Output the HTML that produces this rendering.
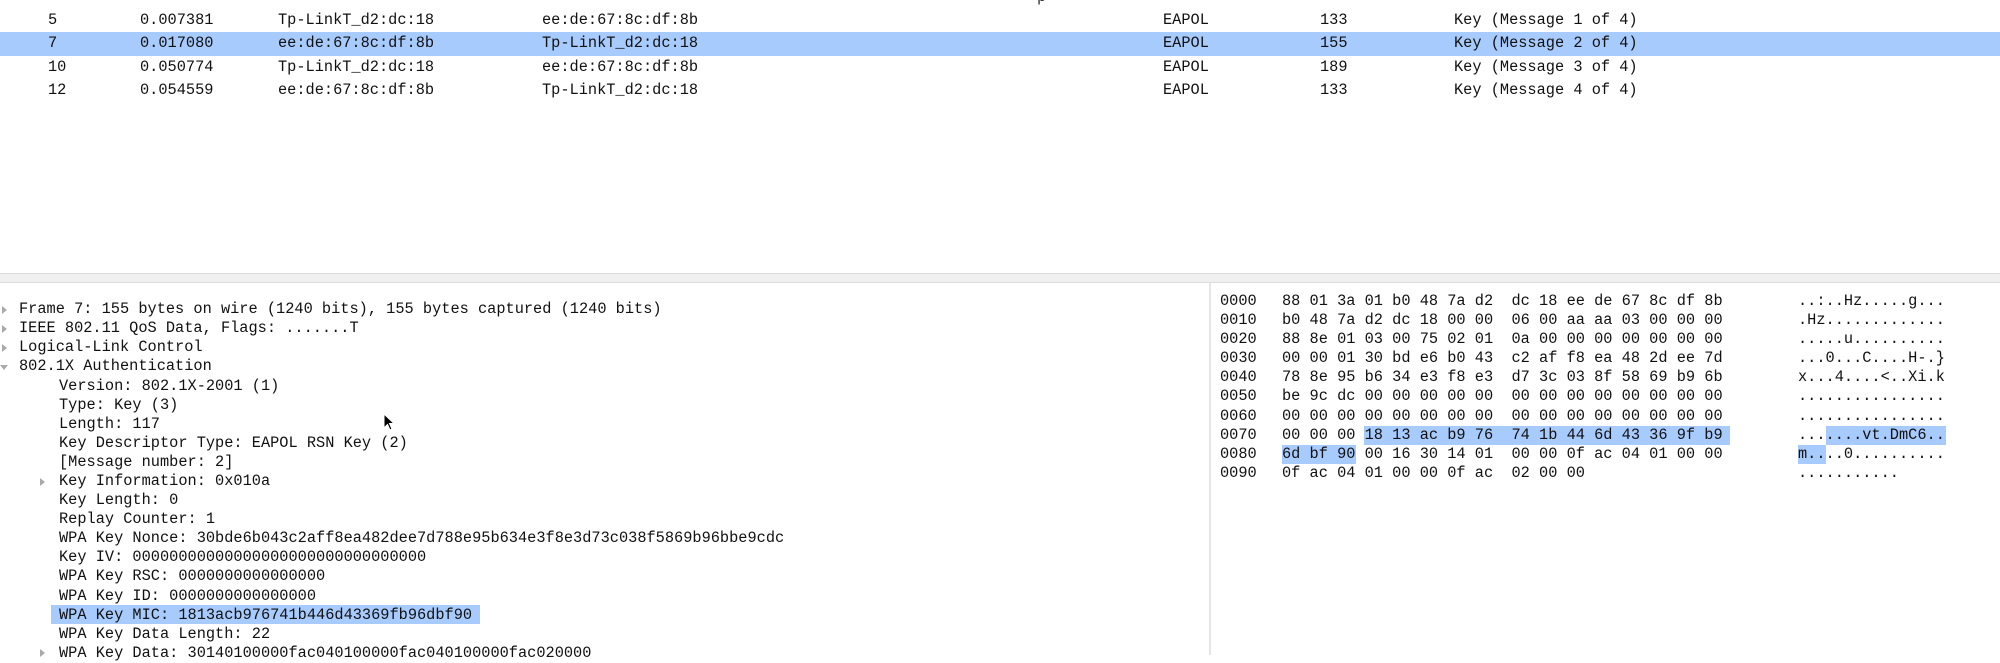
<!DOCTYPE html>
<html><head><meta charset="utf-8"><style>
*{margin:0;padding:0;box-sizing:border-box}
body{width:2000px;height:655px;overflow:hidden;background:#fff;font-family:"Liberation Mono",monospace;font-size:15.3px;color:#111;position:relative}
.a{position:absolute;white-space:pre;line-height:19.1px}
.row{position:absolute;left:0;width:2000px;height:23.5px}
.row .a{top:2px}
.sel{background:#a8cbfd}
.hl{background:#a8cbfd}
.tri{position:absolute;width:0;height:0;border-top:4px solid transparent;border-bottom:4px solid transparent;border-left:5px solid #aaa}
.trd{position:absolute;width:0;height:0;border-left:4px solid transparent;border-right:4px solid transparent;border-top:5px solid #aaa}
</style></head><body>
<div class="a" style="left:1037px;top:-12px;color:#333">p</div>
<div class="row" style="top:8.5px"><span class="a" style="left:48px">5</span><span class="a" style="left:140px">0.007381</span><span class="a" style="left:278px">Tp-LinkT_d2:dc:18</span><span class="a" style="left:542px">ee:de:67:8c:df:8b</span><span class="a" style="left:1163px">EAPOL</span><span class="a" style="left:1320px">133</span><span class="a" style="left:1454px">Key (Message 1 of 4)</span></div>
<div class="row sel" style="top:32px"><span class="a" style="left:48px">7</span><span class="a" style="left:140px">0.017080</span><span class="a" style="left:278px">ee:de:67:8c:df:8b</span><span class="a" style="left:542px">Tp-LinkT_d2:dc:18</span><span class="a" style="left:1163px">EAPOL</span><span class="a" style="left:1320px">155</span><span class="a" style="left:1454px">Key (Message 2 of 4)</span></div>
<div class="row" style="top:55.5px"><span class="a" style="left:48px">10</span><span class="a" style="left:140px">0.050774</span><span class="a" style="left:278px">Tp-LinkT_d2:dc:18</span><span class="a" style="left:542px">ee:de:67:8c:df:8b</span><span class="a" style="left:1163px">EAPOL</span><span class="a" style="left:1320px">189</span><span class="a" style="left:1454px">Key (Message 3 of 4)</span></div>
<div class="row" style="top:79px"><span class="a" style="left:48px">12</span><span class="a" style="left:140px">0.054559</span><span class="a" style="left:278px">ee:de:67:8c:df:8b</span><span class="a" style="left:542px">Tp-LinkT_d2:dc:18</span><span class="a" style="left:1163px">EAPOL</span><span class="a" style="left:1320px">133</span><span class="a" style="left:1454px">Key (Message 4 of 4)</span></div>

<div style="position:absolute;left:0;top:273px;width:2000px;height:10px;background:#f0f0f0;border-top:1px solid #dcdcdc;border-bottom:1px solid #dcdcdc"></div>
<div style="position:absolute;left:1209px;top:283px;width:2px;height:372px;background:#e6e6e6"></div>

<div class="tri" style="left:2px;top:306px"></div>
<div class="tri" style="left:2px;top:325px"></div>
<div class="tri" style="left:2px;top:344px"></div>
<div class="trd" style="left:0px;top:365px"></div>
<div class="tri" style="left:40px;top:478px"></div>
<div class="tri" style="left:40px;top:649px"></div>
<div class="hl" style="position:absolute;left:51px;top:605px;width:429px;height:19px"></div>
<div class="a" style="left:19px;top:300px">Frame 7: 155 bytes on wire (1240 bits), 155 bytes captured (1240 bits)
IEEE 802.11 QoS Data, Flags: .......T
Logical-Link Control
802.1X Authentication</div>
<div class="a" style="left:59px;top:376.5px">Version: 802.1X-2001 (1)
Type: Key (3)
Length: 117
Key Descriptor Type: EAPOL RSN Key (2)
[Message number: 2]
Key Information: 0x010a
Key Length: 0
Replay Counter: 1
WPA Key Nonce: 30bde6b043c2aff8ea482dee7d788e95b634e3f8e3d73c038f5869b96bbe9cdc
Key IV: 00000000000000000000000000000000
WPA Key RSC: 0000000000000000
WPA Key ID: 0000000000000000
WPA Key MIC: 1813acb976741b446d43369fb96dbf90
WPA Key Data Length: 22
WPA Key Data: 30140100000fac040100000fac040100000fac020000</div>
<svg style="position:absolute;left:383px;top:413px" width="14" height="20" viewBox="0 0 14 20"><path d="M1 1 L1 15 L4.5 11.5 L7 17 L9 16 L6.5 10.5 L11 10.5 Z" fill="#000" stroke="#fff" stroke-width="1"/></svg>

<div class="hl" style="position:absolute;left:1364px;top:426px;width:366px;height:19px"></div>
<div class="hl" style="position:absolute;left:1282px;top:445px;width:74px;height:19px"></div>
<div class="hl" style="position:absolute;left:1826px;top:426px;width:120px;height:19px"></div>
<div class="hl" style="position:absolute;left:1798px;top:445px;width:28px;height:19px"></div>
<div class="a" style="left:1220px;top:292px">0000
0010
0020
0030
0040
0050
0060
0070
0080
0090</div>
<div class="a" style="left:1282px;top:292px">88 01 3a 01 b0 48 7a d2  dc 18 ee de 67 8c df 8b
b0 48 7a d2 dc 18 00 00  06 00 aa aa 03 00 00 00
88 8e 01 03 00 75 02 01  0a 00 00 00 00 00 00 00
00 00 01 30 bd e6 b0 43  c2 af f8 ea 48 2d ee 7d
78 8e 95 b6 34 e3 f8 e3  d7 3c 03 8f 58 69 b9 6b
be 9c dc 00 00 00 00 00  00 00 00 00 00 00 00 00
00 00 00 00 00 00 00 00  00 00 00 00 00 00 00 00
00 00 00 18 13 ac b9 76  74 1b 44 6d 43 36 9f b9
6d bf 90 00 16 30 14 01  00 00 0f ac 04 01 00 00
0f ac 04 01 00 00 0f ac  02 00 00</div>
<div class="a" style="left:1798px;top:292px">..:..Hz.....g...
.Hz.............
.....u..........
...0...C....H-.}
x...4....&lt;..Xi.k
................
................
.......vt.DmC6..
m....0..........
...........</div>
</body></html>
